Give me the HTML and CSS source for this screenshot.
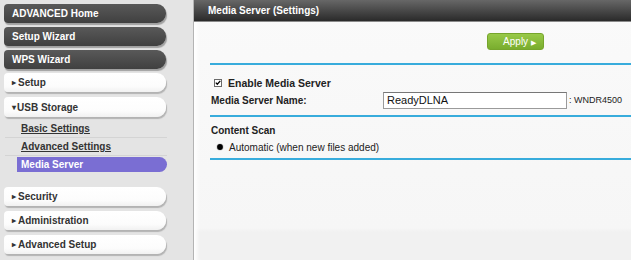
FILE: index.html
```html
<!DOCTYPE html>
<html>
<head>
    <title>Media Server (Settings)</title>
    <link rel="stylesheet" href="styles.css">
</head>
<body>
    <div class="page">
        <div class="sidebar">
            <a class="nav-dark">ADVANCED Home</a>
            <a class="nav-dark">Setup Wizard</a>
            <a class="nav-dark">WPS Wizard</a>
            <a class="nav-light"><span class="arrow">&#9656;</span>Setup</a>
            <a class="nav-light open"><span class="arrow">&#9662;</span>USB Storage</a>
            <ul class="sub-menu">
                <li><a>Basic Settings</a></li>
                <li><a>Advanced Settings</a></li>
                <li class="active"><a>Media Server</a></li>
            </ul>
            <a class="nav-light"><span class="arrow">&#9656;</span>Security</a>
            <a class="nav-light"><span class="arrow">&#9656;</span>Administration</a>
            <a class="nav-light"><span class="arrow">&#9656;</span>Advanced Setup</a>
        </div>
        <div class="main">
            <div class="main-header">Media Server (Settings)</div>
            <div class="content">
                <div class="button-row">
                    <button class="apply-button">Apply <span class="apply-arrow">&#9654;</span></button>
                </div>
                <div class="section">
                    <div class="check-row">
                        <svg class="check-box" width="8" height="8" viewBox="0 0 8 8">
                            <rect x="0.5" y="0.5" width="7" height="7" fill="#fff" stroke="#6a6a6a"/>
                            <path d="M1.8 3.6 L3.3 5.2 L6.3 1.9" fill="none" stroke="#000" stroke-width="1.3"/>
                        </svg>
                        <span>Enable Media Server</span>
                    </div>
                    <div class="name-row">
                        <span class="field-label">Media Server Name:</span>
                        <input type="text" class="name-input" value="ReadyDLNA">
                        <span class="suffix">: WNDR4500</span>
                    </div>
                </div>
                <div class="section last">
                    <div class="section-title">Content Scan</div>
                    <div class="radio-row">
                        <svg class="radio-dot" width="8" height="8" viewBox="0 0 8 8">
                            <circle cx="4" cy="4" r="3.6" fill="#ccc"/>
                            <circle cx="4" cy="4" r="2.9" fill="#000"/>
                        </svg>
                        <span>Automatic (when new files added)</span>
                    </div>
                </div>
            </div>
        </div>
    </div>
</body>
</html>
```

FILE: styles.css
```css
* {
    margin: 0;
    padding: 0;
    box-sizing: border-box;
}

body {
    font-family: 'Liberation Sans', Arial, sans-serif;
    font-size: 10px;
    color: #222;
    width: 631px;
    height: 260px;
    overflow: hidden;
}

.page {
    display: flex;
    height: 260px;
}

/* left navigation */
.sidebar {
    width: 194px;
    flex-shrink: 0;
    background: #e4e4e4;
    border-right: 1px solid #b4b4b4;
    padding: 4px 0 0 4px;
    display: flex;
    flex-direction: column;
}

.nav-dark,
.nav-light {
    display: flex;
    align-items: center;
    width: 162px;
    height: 19px;
    padding-left: 8px;
    font-weight: bold;
    border-radius: 4px 9px 9px 4px;
    flex-shrink: 0;
}

.nav-dark {
    color: #fff;
    background: linear-gradient(#595959, #404040);
    box-shadow: 1px 2px 1px #a0a0a0;
    margin-bottom: 4px;
}

.nav-light {
    color: #333;
    background: linear-gradient(#fff, #fcfcfc 70%, #f1f1f1);
    box-shadow: 1px 2px 1px #b3b3b3;
    margin-bottom: 5px;
}

.nav-light .arrow {
    font-size: 8px;
    margin-right: 2px;
}

.nav-light.open {
    height: 20px;
    margin-bottom: 3px;
}

.nav-light.open .arrow {
    margin-right: 1px;
}

.sub-menu {
    list-style: none;
    margin: 0 0 15px 1px;
    width: 162px;
}

.sub-menu li {
    height: 18px;
    display: flex;
    align-items: center;
    border-bottom: 1px solid #d4d4d4;
    padding-left: 16px;
}

.sub-menu li a {
    color: #333;
    font-weight: bold;
    text-decoration: underline;
}

.sub-menu li.active {
    background: #7a6ed3;
    border-bottom: none;
    border-radius: 0 8px 8px 0;
    margin: 1px 0 0 12px;
    height: 15px;
    padding-left: 4px;
    width: 150px;
}

.sub-menu li.active a {
    color: #fff;
    text-decoration: none;
}

/* main panel */
.main {
    flex: 1;
    background: linear-gradient(#fafafa, #f6f6f6 228px, #f1f1f1 232px);
    box-shadow: inset 6px 0 4px -3px #fff;
}

.main-header {
    height: 22px;
    background: linear-gradient(#676767, #2a2a2a);
    border-bottom: 1px solid #8a8a8a;
    color: #fff;
    font-weight: bold;
    padding: 5px 0 0 14px;
}

.content {
    padding-left: 16px;
}

.button-row {
    display: flex;
    padding: 11px 0 0 277px;
    height: 41px;
}

.apply-button {
    width: 57px;
    height: 17px;
    border: 1px solid #76a52c;
    border-radius: 3px;
    background: linear-gradient(#98c948, #79ad2e);
    color: #fff;
    font-family: inherit;
    font-size: 10px;
    padding-left: 8px;
}

.apply-arrow {
    font-size: 7px;
}

.section {
    border-top: 2px solid #38acdc;
    padding: 12px 0 6px 1px;
}

.section.last {
    border-bottom: 2px solid #38acdc;
    padding: 8px 0 5px 1px;
}

.check-row,
.radio-row {
    display: flex;
    align-items: center;
    height: 12px;
}

.check-row {
    font-weight: bold;
    font-size: 10.5px;
    gap: 6px;
    margin-left: 3px;
}

.radio-row {
    gap: 5px;
    margin: 4px 0 0 5px;
}

.name-row {
    display: flex;
    align-items: center;
    height: 18px;
    margin-top: 2px;
    white-space: nowrap;
}

.field-label {
    font-weight: bold;
    width: 172px;
    flex-shrink: 0;
}

.name-input {
    width: 184px;
    height: 17px;
    flex-shrink: 0;
    border: 1px solid #9a9a9a;
    border-top-color: #777;
    font-family: inherit;
    font-size: 11px;
    padding-left: 3px;
    color: #111;
    background: #fff;
}

.suffix {
    margin-left: 2px;
    font-size: 9px;
}

.section-title {
    font-weight: bold;
    height: 12px;
    line-height: 12px;
}
```
